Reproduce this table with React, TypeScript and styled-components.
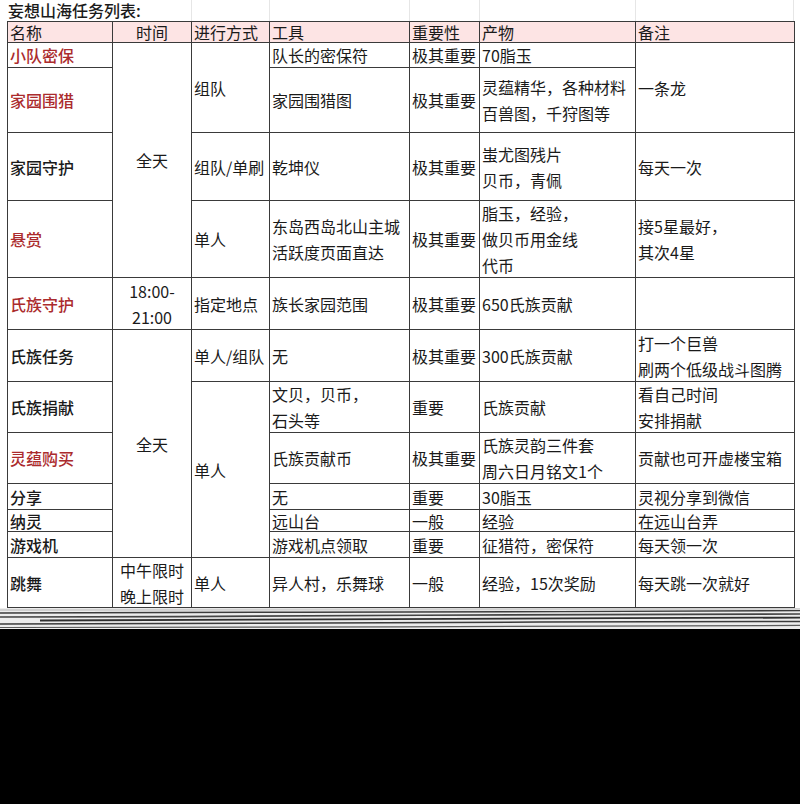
import styled, {createGlobalStyle} from "styled-components"

const COLUMNS = "105px 79px 78px 140px 70px 156px 159px"
const ROWS = "21px 25px 65px 68px 77px 52px 52px 51px 51px 26px 22px 26px 50px"

type Cell = {
  text: string | string[]
  span?: number
  red?: boolean
  bold?: boolean
  center?: boolean
  head?: boolean
}

const header: Cell[] = ["名称", "时间", "进行方式", "工具", "重要性", "产物", "备注"].map((t, i) => ({
  text: t,
  head: true,
  center: i === 1,
}))

const body: Cell[][] = [
  [
    {text: "小队密保", red: true},
    {text: "全天", span: 4, center: true},
    {text: "组队", span: 2},
    {text: "队长的密保符"},
    {text: "极其重要"},
    {text: "70脂玉"},
    {text: "一条龙", span: 2},
  ],
  [
    {text: "家园围猎", red: true},
    {text: "家园围猎图"},
    {text: "极其重要"},
    {text: ["灵蕴精华，各种材料", "百兽图，千狩图等"]},
  ],
  [
    {text: "家园守护", bold: true},
    {text: "组队/单刷"},
    {text: "乾坤仪"},
    {text: "极其重要"},
    {text: ["蚩尤图残片", "贝币，青佩"]},
    {text: "每天一次"},
  ],
  [
    {text: "悬赏", red: true},
    {text: "单人"},
    {text: ["东岛西岛北山主城", "活跃度页面直达"]},
    {text: "极其重要"},
    {text: ["脂玉，经验，", "做贝币用金线", "代币"]},
    {text: ["接5星最好，", "其次4星"]},
  ],
  [
    {text: "氏族守护", red: true},
    {text: ["18:00-", "21:00"], center: true},
    {text: "指定地点"},
    {text: "族长家园范围"},
    {text: "极其重要"},
    {text: "650氏族贡献"},
    {text: ""},
  ],
  [
    {text: "氏族任务", bold: true},
    {text: "全天", span: 6, center: true},
    {text: "单人/组队"},
    {text: "无"},
    {text: "极其重要"},
    {text: "300氏族贡献"},
    {text: ["打一个巨兽", "刷两个低级战斗图腾"]},
  ],
  [
    {text: "氏族捐献", bold: true},
    {text: "单人", span: 5},
    {text: ["文贝，贝币，", "石头等"]},
    {text: "重要"},
    {text: "氏族贡献"},
    {text: ["看自己时间", "安排捐献"]},
  ],
  [
    {text: "灵蕴购买", red: true},
    {text: "氏族贡献币"},
    {text: "极其重要"},
    {text: ["氏族灵韵三件套", "周六日月铭文1个"]},
    {text: "贡献也可开虚楼宝箱"},
  ],
  [
    {text: "分享", bold: true},
    {text: "无"},
    {text: "重要"},
    {text: "30脂玉"},
    {text: "灵视分享到微信"},
  ],
  [
    {text: "纳灵", bold: true},
    {text: "远山台"},
    {text: "一般"},
    {text: "经验"},
    {text: "在远山台弄"},
  ],
  [
    {text: "游戏机", bold: true},
    {text: "游戏机点领取"},
    {text: "重要"},
    {text: "征猎符，密保符"},
    {text: "每天领一次"},
  ],
  [
    {text: "跳舞", bold: true},
    {text: ["中午限时", "晚上限时"], center: true},
    {text: "单人"},
    {text: "异人村，乐舞球"},
    {text: "一般"},
    {text: "经验，15次奖励"},
    {text: "每天跳一次就好"},
  ],
]

const GlobalStyle = createGlobalStyle`
  html, body {
    margin: 0;
    padding: 0;
    background: #000;
  }
  * {
    box-sizing: border-box;
  }
`

const Page = styled.div`
  width: 800px;
  height: 804px;
  display: flex;
  flex-direction: column;
  background: #000;
  font-family: "Noto Sans CJK SC", "Noto Sans", sans-serif;
  color: #1a1a1a;
  font-size: 16px;
  overflow: hidden;
`

const Sheet = styled.div`
  background: #fff;
  padding-left: 7px;
`

const TitleBar = styled.div`
  display: grid;
  grid-template-columns: ${COLUMNS};
  height: 21px;
`

const Title = styled.div`
  grid-column: span 2;
  padding-left: 1px;
  line-height: 20px;
  font-weight: 500;
  white-space: nowrap;
`

const Gridline = styled.div<{$last?: boolean}>`
  border-left: 1px solid #e6e6e6;
  border-right: ${(p) => (p.$last ? "1px solid #e6e6e6" : "none")};
`

const Table = styled.div`
  display: grid;
  grid-template-columns: ${COLUMNS};
  grid-template-rows: ${ROWS};
  width: max-content;
  border-top: 1px solid #3a3a3a;
  border-left: 1px solid #3a3a3a;
`

const Td = styled.div<{$span: number; $center?: boolean; $head?: boolean; $red?: boolean; $bold?: boolean}>`
  grid-row: span ${(p) => p.$span};
  display: flex;
  flex-direction: column;
  justify-content: ${(p) => (p.$head ? "flex-end" : "center")};
  align-items: ${(p) => (p.$center ? "center" : "flex-start")};
  padding: 0 2px;
  border-right: 1px solid #3a3a3a;
  border-bottom: 1px solid #3a3a3a;
  background: ${(p) => (p.$head ? "#fde4e4" : "#fff")};
  color: ${(p) => (p.$red ? "#ab2b2d" : "#1a1a1a")};
  font-weight: ${(p) => (p.$red || p.$bold ? 500 : 400)};
  white-space: nowrap;
  line-height: ${(p) => (p.$head ? "20px" : "26px")};
  min-height: 0;
`

const Streaks = styled.svg`
  display: block;
  width: 800px;
  height: 21px;
  background: #ececec;
`

const Dark = styled.div`
  flex: 1;
  background: #000;
`

function renderCell(cell: Cell, key: string) {
  const lines = Array.isArray(cell.text) ? cell.text : [cell.text]
  return (
    <Td
      key={key}
      $span={cell.span || 1}
      $center={cell.center}
      $head={cell.head}
      $red={cell.red}
      $bold={cell.bold}
    >
      {lines.map((line, i) => (
        <span key={i}>{line}</span>
      ))}
    </Td>
  )
}

export default function App() {
  return (
    <>
      <GlobalStyle />
      <Page>
        <Sheet>
          <TitleBar>
            <Title>妄想山海任务列表:</Title>
            <Gridline />
            <Gridline />
            <Gridline />
            <Gridline />
            <Gridline $last />
          </TitleBar>
          <Table>
            {header.map((cell, i) => renderCell(cell, `h${i}`))}
            {body.map((row, r) => row.map((cell, c) => renderCell(cell, `${r}-${c}`)))}
          </Table>
        </Sheet>
        <Streaks viewBox="0 0 800 21" preserveAspectRatio="none">
          <path d="M0 2 L380 1.5 L800 0.8" stroke="#d0d0d0" strokeWidth="2" fill="none" />
          <path d="M0 5 L300 4.2 L560 3.6 L800 2.6" stroke="#3c3c3c" strokeWidth="1.4" fill="none" />
          <path d="M0 9 L180 8.6 L420 7.2 L800 6" stroke="#444" strokeWidth="1.6" fill="none" />
          <path d="M40 12.5 L330 11.4 L620 10.2 L800 9.6" stroke="#2e2e2e" strokeWidth="1.8" fill="none" />
          <path d="M0 16 L260 15.2 L540 14 L800 13.4" stroke="#3a3a3a" strokeWidth="1.5" fill="none" />
          <path d="M0 19.5 L400 18.8 L800 17.4" stroke="#5a5a5a" strokeWidth="1.2" fill="none" />
        </Streaks>
        <Dark />
      </Page>
    </>
  )
}
